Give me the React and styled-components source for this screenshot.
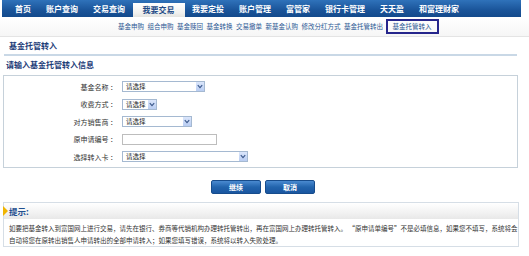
import React from "react";
import styled, { createGlobalStyle } from "styled-components";

const GlobalStyle = createGlobalStyle`
  html, body {
    margin: 0;
    padding: 0;
    background: #ffffff;
  }
  body {
    font-family: "Noto Sans CJK SC", "Liberation Sans", sans-serif;
    color: #333333;
  }
`;

const navItems = [
  "首页",
  "账户查询",
  "交易查询",
  "我要交易",
  "我要定投",
  "账户管理",
  "富管家",
  "银行卡管理",
  "天天盈",
  "和富理财家",
];

const subItems = [
  "基金申购",
  "组合申购",
  "基金赎回",
  "基金转换",
  "交易撤单",
  "新基金认购",
  "修改分红方式",
  "基金托管转出",
  "基金托管转入",
];

const fields = [
  { label: "基金名称", kind: "select", width: 83 },
  { label: "收费方式", kind: "select", width: 35 },
  { label: "对方销售商", kind: "select", width: 70 },
  { label: "原申请编号", kind: "input", width: 95 },
  { label: "选择转入卡", kind: "select", width: 126 },
];

export default function App() {
  return (
    <>
      <GlobalStyle />
      <Page>
        <NavBar>
          {navItems.map((item) => (
            <NavItem key={item} $active={item === "我要交易"}>
              {item}
            </NavItem>
          ))}
        </NavBar>

        <SubNav>
          {subItems.map((item) => (
            <SubLink key={item} $current={item === "基金托管转入"}>
              {item}
            </SubLink>
          ))}
        </SubNav>

        <PageTitle>基金托管转入</PageTitle>
        <SectionHeading>请输入基金托管转入信息</SectionHeading>

        <FormBox>
          {fields.map((f) => (
            <FormRow key={f.label}>
              <Label>{f.label} ：</Label>
              {f.kind === "select" ? (
                <SelectBox $width={f.width}>
                  <SelectText>请选择</SelectText>
                  <SelectArrow>
                    <svg width="6" height="5" viewBox="0 0 6 5">
                      <path
                        d="M0.8 1.2 L3 3.6 L5.2 1.2"
                        fill="none"
                        stroke="#3d5a8c"
                        strokeWidth="1.2"
                      />
                    </svg>
                  </SelectArrow>
                </SelectBox>
              ) : (
                <TextInput $width={f.width} />
              )}
            </FormRow>
          ))}
        </FormBox>

        <ButtonRow>
          <Button>继续</Button>
          <Button>取消</Button>
        </ButtonRow>

        <TipBox>
          <TipHeader>
            <TipMarker />
            <TipTitle>提示:</TipTitle>
          </TipHeader>
          <TipBody>
            <TipLine>
              如要把基金转入到富国网上进行交易，请先在银行、券商等代销机构办理转托管转出，再在富国网上办理转托管转入。
              “原申请单编号”不是必填信息，如果您不填写，系统将会
            </TipLine>
            <TipLine>
              自动将您在原转出销售人申请转出的全部申请转入；如果您填写错误，系统将以转入失败处理。
            </TipLine>
          </TipBody>
        </TipBox>
      </Page>
    </>
  );
}

const Page = styled.div`
  width: 529px;
  height: 256px;
  overflow: hidden;
`;

const NavBar = styled.div`
  display: flex;
  align-items: flex-end;
  height: 17px;
  margin: 0 8px 0 2px;
  padding-left: 5.5px;
  background: linear-gradient(#2f72ba, #1a5499 60%, #134a8c);
`;

const NavItem = styled.div`
  padding: ${(p) => (p.$active ? "0 10px" : "0 7.5px")};
  height: ${(p) => (p.$active ? "14px" : "17px")};
  line-height: ${(p) => (p.$active ? "14px" : "17px")};
  font-size: 8px;
  font-weight: 700;
  white-space: nowrap;
  color: ${(p) => (p.$active ? "#1d4a86" : "#ffffff")};
  background: ${(p) =>
    p.$active ? "linear-gradient(#ffffff, #f1f1ef 70%, #e4e4e0)" : "none"};
`;

const SubNav = styled.div`
  display: flex;
  align-items: center;
  height: 19px;
  padding-left: 118px;
  gap: 3.5px;
  background: linear-gradient(#ffffff, #f6f6f6);
  border-bottom: 1px solid #e4e4e4;
`;

const SubLink = styled.span`
  font-size: 6.5px;
  white-space: nowrap;
  color: #2b5894;
  line-height: 9px;
  padding: ${(p) => (p.$current ? "1px 5px" : "0")};
  border: ${(p) => (p.$current ? "2px solid #26268c" : "none")};
  margin-left: ${(p) => (p.$current ? "-1px" : "0")};
`;

const PageTitle = styled.div`
  height: 17px;
  line-height: 17px;
  margin: 0 12px 0 4px;
  padding-left: 5px;
  font-size: 8px;
  font-weight: 700;
  color: #1d3c78;
  border-bottom: 2px solid #c9d8e6;
`;

const SectionHeading = styled.div`
  height: 19px;
  line-height: 17px;
  padding-left: 6px;
  font-size: 8px;
  font-weight: 700;
  color: #1d3c78;
`;

const FormBox = styled.div`
  margin: 0 11px 0 3px;
  padding: 2px 0 1px;
  border: 1px solid #c6d1da;
`;

const FormRow = styled.div`
  display: grid;
  grid-template-columns: 113px auto;
  column-gap: 5px;
  align-items: center;
  justify-content: start;
  height: 17.5px;
`;

const Label = styled.span`
  text-align: right;
  font-size: 7px;
  color: #333333;
  white-space: nowrap;
`;

const SelectBox = styled.div`
  display: flex;
  align-items: center;
  box-sizing: border-box;
  width: ${(p) => p.$width}px;
  height: 11px;
  border: 1px solid #a5b9d1;
  background: #ffffff;
`;

const SelectText = styled.span`
  flex: 1;
  padding-left: 3px;
  font-size: 6.5px;
  line-height: 9px;
  color: #222222;
`;

const SelectArrow = styled.span`
  display: flex;
  align-items: center;
  justify-content: center;
  width: 8px;
  height: 9px;
  background: linear-gradient(#dbe6fb, #b9cdf2);
`;

const TextInput = styled.div`
  box-sizing: border-box;
  width: ${(p) => p.$width}px;
  height: 11px;
  border: 1px solid #bdbdbd;
  background: #ffffff;
`;

const ButtonRow = styled.div`
  display: flex;
  justify-content: center;
  gap: 4px;
  margin: 12px 0 8px;
  padding-right: 3px;
`;

const Button = styled.div`
  box-sizing: border-box;
  width: 50px;
  height: 14px;
  line-height: 12px;
  text-align: center;
  font-size: 7px;
  font-weight: 700;
  color: #ffffff;
  border: 1px solid #174c8c;
  border-radius: 2px;
  background: linear-gradient(#4a8ad0, #2264ad 50%, #1a56a0);
`;

const TipBox = styled.div`
  margin: 0 10px 0 3px;
  border: 1px solid #d6dee6;
`;

const TipHeader = styled.div`
  display: flex;
  align-items: center;
  height: 16px;
  background: linear-gradient(#ffffff, #f2f2f2 60%, #e8e8e8);
`;

const TipMarker = styled.span`
  width: 0;
  height: 0;
  margin-left: -1px;
  border-top: 5px solid transparent;
  border-bottom: 5px solid transparent;
  border-left: 5px solid #f0b400;
`;

const TipTitle = styled.span`
  margin-left: 1px;
  font-size: 8.5px;
  font-weight: 700;
  color: #1f4f8f;
`;

const TipBody = styled.div`
  padding: 3px 0 0 5px;
`;

const TipLine = styled.div`
  font-size: 6.5px;
  line-height: 12px;
  white-space: nowrap;
  color: #333333;
`;
